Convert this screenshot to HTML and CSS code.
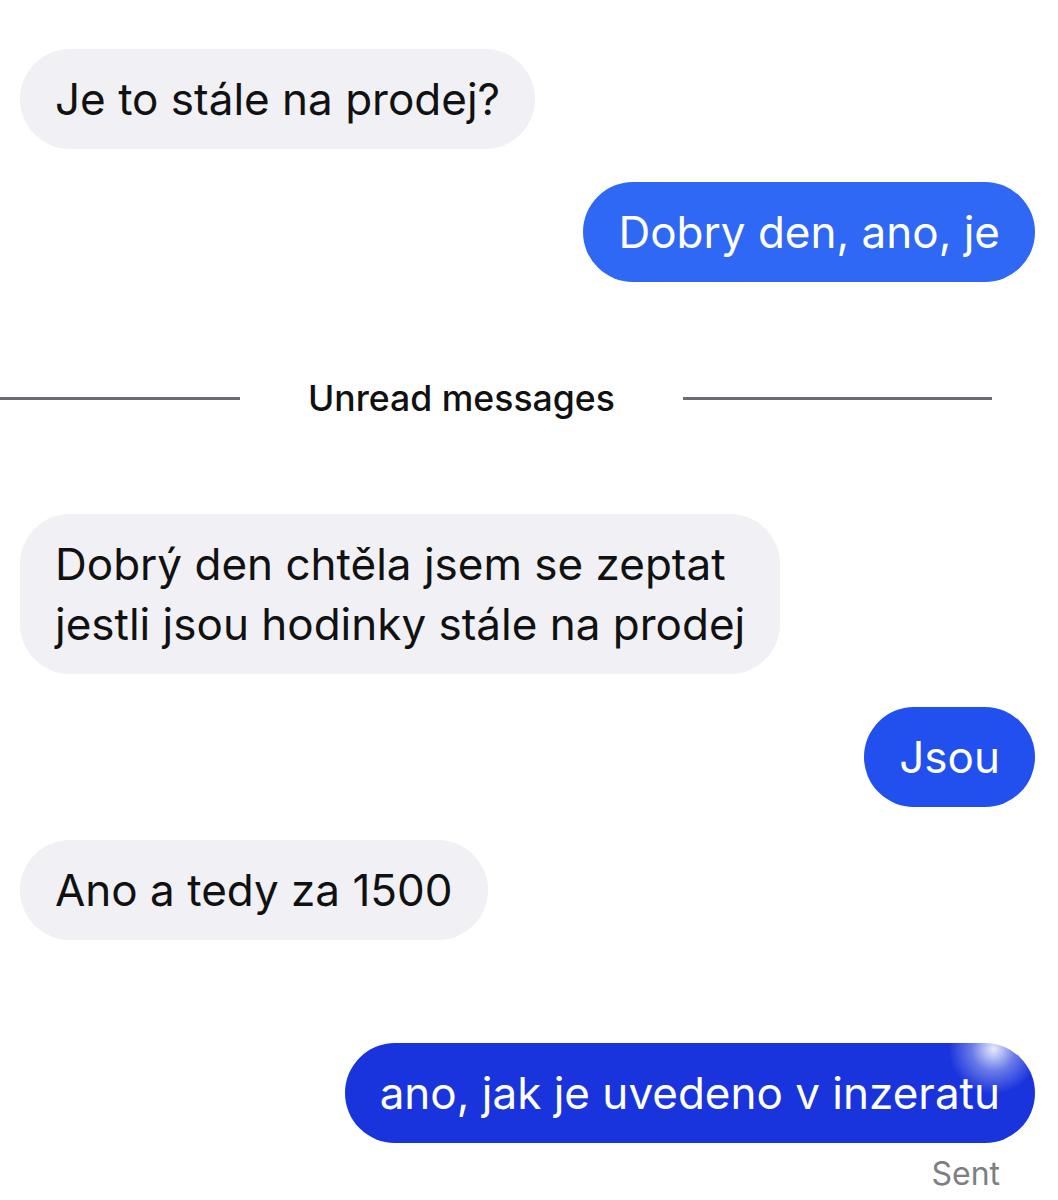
FILE: index.html
```html
<!DOCTYPE html>
<html lang="cs">
<head>
    <meta charset="UTF-8">
    <meta name="viewport" content="width=device-width, initial-scale=1.0">
    <title>Zprávy</title>
    <link rel="stylesheet" href="styles.css">
</head>
<body>

<div class="thread">
    <div class="row in">
        <div class="bubble">Je to stále na prodej?</div>
    </div>
    <div class="row out">
        <div class="bubble blue-1">Dobry den, ano, je</div>
    </div>

    <!-- Unread divider -->
    <div class="divider">
        <span class="line line-left"></span>
        <span class="divider-text">Unread messages</span>
        <span class="line line-right"></span>
    </div>

    <div class="row in">
        <div class="bubble">Dobrý den chtěla jsem se zeptat<br>jestli jsou hodinky stále na prodej</div>
    </div>
    <div class="row out">
        <div class="bubble blue-2">Jsou</div>
    </div>
    <div class="row in">
        <div class="bubble">Ano a tedy za 1500</div>
    </div>
    <div class="row out last">
        <div class="bubble blue-3">ano, jak je uvedeno v inzeratu</div>
    </div>
    <div class="status">Sent</div>
</div>

</body>
</html>
```

FILE: styles.css
```css
body {
    margin: 0;
    padding: 0;
    background: #ffffff;
    font-family: 'Inter', 'Noto Sans', sans-serif;
    color: #000;
}

.thread {
    padding: 49px 23px 0 20px;
    display: flex;
    flex-direction: column;
    gap: 33px;
}

.row {
    display: flex;
}

.row.in {
    justify-content: flex-start;
}

.row.out {
    justify-content: flex-end;
}

.bubble {
    font-size: 44px;
    line-height: 60px;
    padding: 20px 35px;
    border-radius: 50px;
    background: #f0f0f5;
    color: #111;
    white-space: nowrap;
}

.blue-1,
.blue-2,
.blue-3 {
    color: #fff;
}

.blue-1 {
    background: #2f68f4;
}

.blue-2 {
    background: #2150ee;
}

.blue-3 {
    background:
        radial-gradient(circle at 94% 6%, rgba(255, 255, 255, 0.9) 0, rgba(255, 255, 255, 0.35) 22px, rgba(255, 255, 255, 0) 45px),
        #1934dc;
}

.divider {
    display: flex;
    align-items: center;
    gap: 68px;
    margin: 62px 0 61px -20px;
}

.line {
    height: 3px;
    background: #6c6c72;
}

.line-left {
    width: 240px;
}

.line-right {
    width: 309px;
}

.divider-text {
    font-size: 35.6px;
    font-weight: 500;
    color: #111;
}

.row.last {
    margin-top: 70px;
}

.status {
    margin-top: -22px;
    text-align: right;
    padding-right: 35px;
    font-size: 32px;
    color: #7e7e83;
}
```
